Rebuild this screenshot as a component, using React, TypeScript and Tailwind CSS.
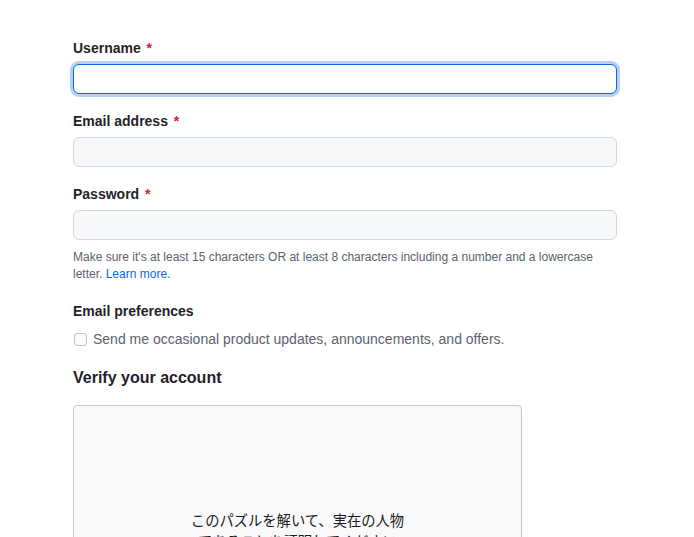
const font = { fontFamily: '"Liberation Sans", Arial, sans-serif' };

function Field({ label, focused, children }: { label: string; focused?: boolean; children?: React.ReactNode }) {
  return (
    <div className={children ? "" : "mb-[17px]"}>
      <label className="block h-5 leading-5 mb-1.5 text-sm font-bold text-[#1f2328]">
        {label} <span className="ml-0.5 text-[#cf222e]">*</span>
      </label>
      <input
        type="text"
        className={
          focused
            ? "block w-full h-[30px] px-3 rounded-md border border-[#0969da] bg-white outline-none ring-[3px] ring-[#0969da]/30"
            : "block w-full h-[30px] px-3 rounded-md border border-[#d1d9e0] bg-[#f6f8fa] outline-none"
        }
      />
      {children}
    </div>
  );
}

export default function App() {
  return (
    <div className="min-h-screen bg-white overflow-hidden" style={font}>
      <form className="ml-[73px] w-[544px] pt-[38px]">
        <Field label="Username" focused />
        <Field label="Email address" />
        <Field label="Password">
          <p className="mt-[9px] text-xs leading-[17px] text-[#59636e]">
            Make sure it's at least 15 characters OR at least 8 characters including a number and a lowercase
            letter. <a href="#" className="text-[#0969da]">Learn more</a>.
          </p>
        </Field>

        <h3 className="mt-[18px] h-5 leading-5 text-sm font-bold text-[#1f2328]">Email preferences</h3>
        <label className="mt-2 flex items-center h-5 text-sm text-[#59636e]">
          <span className="ml-px mr-[6px] w-[13px] h-[13px] rounded-[3px] border border-[#c2c2c2] bg-[#fafafa]" />
          Send me occasional product updates, announcements, and offers.
        </label>

        <h2 className="mt-[17px] h-6 leading-6 text-base font-bold text-[#1f2328]">Verify your account</h2>

        <div className="mt-[15px] w-[449px] h-[400px] rounded border border-[#c4c4c4] bg-[#f8f9fb] pt-[103px] flex flex-col items-center">
          <p
            className="text-[14.3px] leading-[21px] text-[#1a1a1a] text-center w-[222px]"
            style={{ fontFamily: '"Noto Sans CJK JP", sans-serif' }}
          >
            このパズルを解いて、実在の人物であることを証明してください
          </p>
        </div>
      </form>
    </div>
  );
}
